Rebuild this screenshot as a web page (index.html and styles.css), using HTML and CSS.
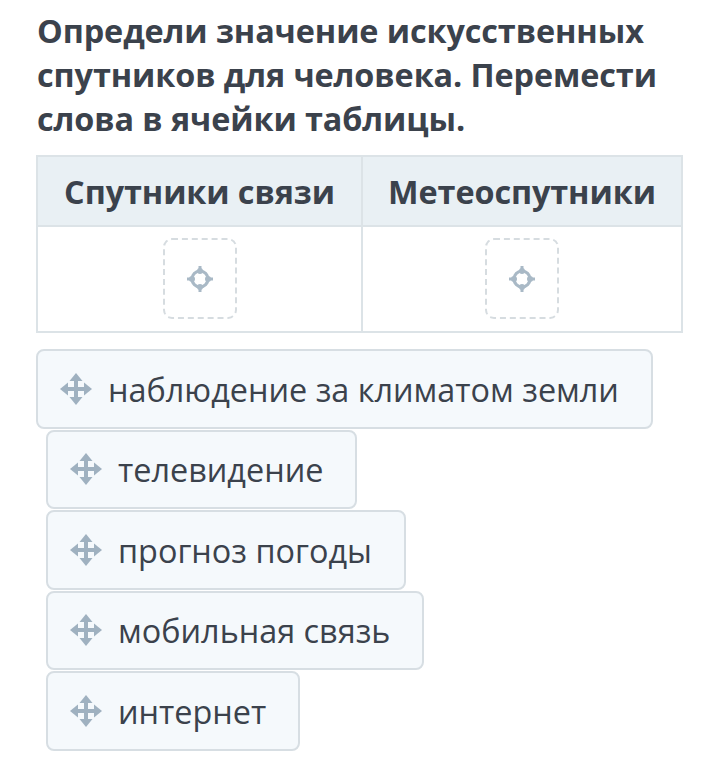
FILE: index.html
```html
<!DOCTYPE html>
<html lang="ru">
<head>
<meta charset="utf-8">
<link rel="stylesheet" href="styles.css">
</head>
<body>
<div class="page">
  <h1 class="title">Определи значение искусственных спутников для человека. Перемести слова в ячейки таблицы.</h1>
  <div class="table">
    <div class="th">Спутники связи</div>
    <div class="th">Метеоспутники</div>
    <div class="td"><div class="drop"><svg width="30" height="30" viewBox="0 0 30 30"><g fill="none" stroke="#a9b9c6" stroke-width="3"><circle cx="15" cy="15" r="8"/><line x1="15" y1="2" x2="15" y2="8"/><line x1="15" y1="22" x2="15" y2="28"/><line x1="2" y1="15" x2="8" y2="15"/><line x1="22" y1="15" x2="28" y2="15"/></g><g fill="#a9b9c6"><circle cx="15" cy="7" r="3"/><circle cx="15" cy="23" r="3"/><circle cx="7" cy="15" r="3"/><circle cx="23" cy="15" r="3"/></g></svg></div></div>
    <div class="td"><div class="drop"><svg width="30" height="30" viewBox="0 0 30 30"><g fill="none" stroke="#a9b9c6" stroke-width="3"><circle cx="15" cy="15" r="8"/><line x1="15" y1="2" x2="15" y2="8"/><line x1="15" y1="22" x2="15" y2="28"/><line x1="2" y1="15" x2="8" y2="15"/><line x1="22" y1="15" x2="28" y2="15"/></g><g fill="#a9b9c6"><circle cx="15" cy="7" r="3"/><circle cx="15" cy="23" r="3"/><circle cx="7" cy="15" r="3"/><circle cx="23" cy="15" r="3"/></g></svg></div></div>
  </div>
  <div class="items">
    <div class="item first"><svg class="mv" width="32" height="32" viewBox="0 0 32 32"><g fill="#9fb1c0"><rect x="14" y="7" width="4" height="18"/><rect x="7" y="14" width="18" height="4"/><polygon points="16,0 9.5,8 22.5,8"/><polygon points="16,32 9.5,24 22.5,24"/><polygon points="0,16 8,9.5 8,22.5"/><polygon points="32,16 24,9.5 24,22.5"/></g></svg><span>наблюдение за климатом земли</span></div>
    <div class="item"><svg class="mv" width="32" height="32" viewBox="0 0 32 32"><g fill="#9fb1c0"><rect x="14" y="7" width="4" height="18"/><rect x="7" y="14" width="18" height="4"/><polygon points="16,0 9.5,8 22.5,8"/><polygon points="16,32 9.5,24 22.5,24"/><polygon points="0,16 8,9.5 8,22.5"/><polygon points="32,16 24,9.5 24,22.5"/></g></svg><span>телевидение</span></div>
    <div class="item"><svg class="mv" width="32" height="32" viewBox="0 0 32 32"><g fill="#9fb1c0"><rect x="14" y="7" width="4" height="18"/><rect x="7" y="14" width="18" height="4"/><polygon points="16,0 9.5,8 22.5,8"/><polygon points="16,32 9.5,24 22.5,24"/><polygon points="0,16 8,9.5 8,22.5"/><polygon points="32,16 24,9.5 24,22.5"/></g></svg><span>прогноз погоды</span></div>
    <div class="item"><svg class="mv" width="32" height="32" viewBox="0 0 32 32"><g fill="#9fb1c0"><rect x="14" y="7" width="4" height="18"/><rect x="7" y="14" width="18" height="4"/><polygon points="16,0 9.5,8 22.5,8"/><polygon points="16,32 9.5,24 22.5,24"/><polygon points="0,16 8,9.5 8,22.5"/><polygon points="32,16 24,9.5 24,22.5"/></g></svg><span>мобильная связь</span></div>
    <div class="item"><svg class="mv" width="32" height="32" viewBox="0 0 32 32"><g fill="#9fb1c0"><rect x="14" y="7" width="4" height="18"/><rect x="7" y="14" width="18" height="4"/><polygon points="16,0 9.5,8 22.5,8"/><polygon points="16,32 9.5,24 22.5,24"/><polygon points="0,16 8,9.5 8,22.5"/><polygon points="32,16 24,9.5 24,22.5"/></g></svg><span>интернет</span></div>
  </div>
</div>
</body>
</html>
```
FILE: styles.css
```css
* { box-sizing: border-box; }
html, body { margin: 0; background: #fff; }
body { font-family: "Open Sans", "Noto Sans", sans-serif; color: #3b424c; }
.page { padding: 8px 20px 0 37px; }
.title {
  margin: 0;
  font-size: 32.4px;
  line-height: 44px;
  font-weight: 700;
  color: #3b424c;
  letter-spacing: -0.1px;
}
.table {
  margin-top: 15px;
  width: 647px;
  margin-left: -1px;
  display: grid;
  grid-template-columns: 325px 1fr;
  border: 2px solid #dce3e7;
}
.th {
  background: #e9f0f4;
  height: 70px;
  display: flex;
  align-items: center;
  justify-content: center;
  font-weight: 700;
  font-size: 32.4px;
  letter-spacing: -0.1px;
  border-bottom: 2px solid #dce3e7;
}
.th:first-child, .td:nth-child(3) { border-right: 2px solid #dce3e7; }
.td {
  height: 104px;
  display: flex;
  justify-content: center;
  padding-top: 11px;
}
.drop {
  width: 74px;
  height: 81px;
  border: 2px dashed #d6dce0;
  border-radius: 9px;
  display: flex;
  align-items: center;
  justify-content: center;
}
.items {
  margin-top: 16px;
  display: flex;
  flex-direction: column;
  align-items: flex-start;
  gap: 1px;
  padding-left: 9px;
}
.item {
  display: flex;
  align-items: center;
  height: 79.5px;
  padding: 0 32px 0 22px;
  background: #f5f9fc;
  border: 2px solid #d7dee3;
  border-radius: 8px;
  font-size: 32.4px;
}
.item.first { margin-left: -10px; }
.mv { margin-right: 16px; flex: none; }
```
